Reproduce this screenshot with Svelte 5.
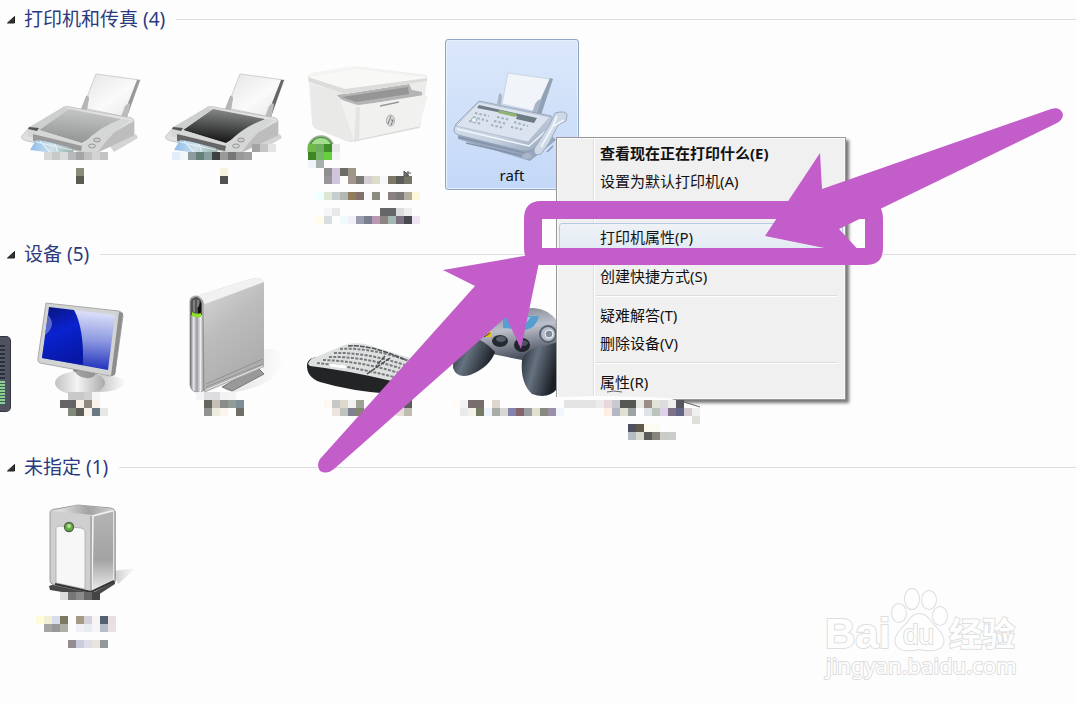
<script>
  const cellsOf = (rows) =>
    rows.flatMap(([x, y, colors]) =>
      colors
        .split(' ')
        .map((fill, i) => ({ x: x + i * 8, y, fill }))
        .filter((c) => c.fill !== '-')
    );

  const blocks = {
    printerA: [
      [44, 152, '#d8d8d8 #c8c9c9 #d9dadb #b8b9ba #a5a5a5 #c0c0c0 #d4d2d3 #c4c4c4'],
      [76, 168, '#8b8c7c'],
      [76, 176, '#5d5b54']
    ],
    printerB: [
      [252, 144, '#a4a4a4 #c5c5c5 #e4e4e4'],
      [172, 152, '#e2eefa #f0f8f8 #8f9c9f #66807a #86a09e #3c4042 #9a9a9a #777777 #999999 #a0a0a0'],
      [220, 168, '#f6f4df'],
      [220, 176, '#50534f']
    ],
    multi: [
      [308, 144, '#6fb94a #6fae5f #3f8f27 #e8e8e8'],
      [308, 152, '#3d8527 #76b668 #66cf3d #f4f4f4'],
      [308, 160, '#f0f3f8 #a7b0ae'],
      [324, 168, '#8f8f8f #d0c4dd #6e6c64 #9c9788'],
      [324, 176, '#97959b #cfc6de - #a0958f #7b7974 #d6ced5 #dcdccb #f6f7fb #7c7868 #5c5b58 #787669'],
      [316, 192, '#f0ffff #dde8d2 #c6cdd1 #b3b8b3 #907d5c #82706a #f9f9f9 #8c8b80 - #888081 #7c7a76 #b4ad9f #fdf7d8'],
      [324, 208, '#f6f6fa #e6e9ea - - - - - #646667 #646667 #dcdcde #ecefed'],
      [316, 216, '#fffceb #d8dde2 - #effafc #f2f0f7 #9c9caf #797f8f #b898b2 #8f8484 #a3b8b2 #7b6f80 #474850 #f0e5f5']
    ],
    monitor: [
      [68, 392, '#c9c9c9 #c9c9c9 #d0d0d0 #f5f5f5'],
      [60, 400, '#646467 #646467 #f8f2e6 #8f897d #faf2ea'],
      [68, 408, '#83897a #5e5e56 #faf3ea #6b7885 #e6e8e6']
    ],
    drive: [
      [196, 392, '#f4f4f6 #dedee2 #dddddf #f2f2f2 #f4f4f4'],
      [204, 400, '#666661 #c4c0b8 #8a8c8c #909c96 #7f8f97'],
      [204, 408, '#929292 #ededdf #fbf5ee - #6d6f68']
    ],
    keyboard: [
      [324, 400, '#fdf8f2 #c9c7c3 #dcd8cc #f1f2f2 #9ea297 - - - - #eeeeee #5f5d5c'],
      [332, 408, '#ede5dc #c0c4c1 #7f8090 #80866f #dddddd - - - #e8e0d8 #bfbcb2']
    ],
    gamepad: [
      [452, 400, '#fffcf5 #f3f3f5 #786e6e #786e6e - #ddd8ce'],
      [460, 408, '#e8ebee #f5f2ea #757c66 #edf3fb #a8ada8 #d8d8d4 #8284ab #85646b #9a9ea2 #e2e1d1 #888a7f #9b8ea8 #f0f4fb']
    ],
    behindMenu: [
      [564, 400, '#e4e4e4 #e4e4e4 #e4e4e4 #e4e4e4 #ececec #e8d8dd #c8cacf #565854 #565854 #e8e8e4 #9b8c88 #e2e4d8 #dddddd #eeeeee #56565c'],
      [604, 408, '#fdeee2 #b4b8c4 #e0e0d3 #9da5a3 - #dde3e6 #bac4bb #dcd2ea #80708a #626488 #d5ccd0 #f0f0f0'],
      [692, 416, '#dfdfdb'],
      [628, 424, '#4c5060 #60584b #fdfaf2 #fdfaf2'],
      [628, 432, '#b4bcc4 #d8d8cf #5c5b57 #88847a #cbcbc7 #cbcdca']
    ],
    tower: [
      [60, 592, '#dcdcdc #777777 #8a8a8a #666666 #444444'],
      [36, 616, '#fffdd8 #f3efd5 #d8deeb #7b7a60 - #a59b84 #d6d0da #f7f5f5 #536170 #e8dfdf'],
      [44, 624, '#a5a5a5 #989898 #aeaea6 - #f0f0f7 #e9ecef #f7f4fa #b5bdc8 #e8e0e2'],
      [68, 640, '#938d92 #c9ccda #e1dcea #e9e4e0 #92989a']
    ]
  };

  const menu = [
    { text: '查看现在正在打印什么(E)', bold: true },
    { text: '设置为默认打印机(A)' },
    { blank: true },
    { text: '打印机属性(P)', hot: true },
    { sep: true },
    { text: '创建快捷方式(S)' },
    { sep: true },
    { text: '疑难解答(T)' },
    { text: '删除设备(V)' },
    { sep: true },
    { text: '属性(R)' }
  ];
</script>

{#snippet mosaic(rows)}
  <g shape-rendering="crispEdges">
    {#each cellsOf(rows) as c}
      <rect x={c.x} y={c.y} width="8" height="8" fill={c.fill} />
    {/each}
  </g>
{/snippet}

{#snippet heading(title)}
  <h2>
    <svg class="arrow" viewBox="0 0 8 8" aria-hidden="true"><path d="M7.5 0.5V7H0.5Z" fill="#333" stroke="#222" /></svg>
    <span>{title}</span>
  </h2>
{/snippet}

{#snippet inkjet(dx, lid, edge)}
  <g transform="translate({dx} 0)">
    <path d="M110 146L136 134L138 138L114 152Z" fill="#d4d4d4" />
    <path d="M96 74L140 80L126 117L83 108Z" fill="url(#paper)" stroke="#c4c4c4" stroke-width=".8" />
    <path d="M137 80L140 80L127 117L123 116Z" fill={edge} />
    <path d="M86 96Q89 95 89 99L87 110L81 109Z" fill="#b5b5b5" />
    <path d="M125 106Q130 101 130 105L127 118L121 117Z" fill="#bcbcbc" />
    <path d="M64 107Q67 106 70 107L132 118Q134 119 134 122V135L98 152Q87 154 82 152L27 141Q20 139 22 136L29 128Z" fill="url(#shell)" stroke="#b5b5b5" stroke-width=".7" />
    <path d="M134 121V135L98 152L88 149Q95 143 134 121Z" fill="#bdbdbd" />
    <path d="M69 109L121 119L82 143L39 130Z" fill={lid} />
    <path d="M29 127L39 130L83 144Q100 126 122 119L131 120Q113 130 98 152L84 151L27 136Z" fill="#d5d6d6" />
    <path d="M39 130L69 109L64 108L29 127Z" fill="#cecfcf" />
    <path d="M29 127L39 128L37 131L28 129Z" fill="#555" />
    <path d="M33 134L82 146L81 151L33 141Z" fill={edge} />
    <path d="M36 140L44 141L72 148L74 153L54 153L30 150Z" fill="url(#photo)" />
    <path d="M36 142L72 150M40 141L50 152M55 144L58 153" stroke="#f6fbff" stroke-width="1.2" opacity=".7" />
    <ellipse cx="97" cy="140" rx="3.4" ry="2" fill="#ccc" stroke="#888" stroke-width=".8" />
    <ellipse cx="92" cy="146" rx="3.4" ry="2" fill="#d5d5cf" stroke="#888" stroke-width=".8" />
  </g>
{/snippet}

<main>
  <svg class="defs" aria-hidden="true">
    <defs>
      <linearGradient id="paper" x1="0" y1="0" x2="1" y2="1"><stop stop-color="#e4e4e4" /><stop offset=".55" stop-color="#fafafa" /><stop offset="1" stop-color="#e6e6e6" /></linearGradient>
      <linearGradient id="shell" x2="1" y2="1"><stop stop-color="#dcdcdc" /><stop offset=".6" stop-color="#e3e3e3" /><stop offset="1" stop-color="#c6c6c6" /></linearGradient>
      <linearGradient id="lidLight" x1=".6" y1="0" x2=".4" y2="1"><stop stop-color="#c6c7c7" /><stop offset="1" stop-color="#929393" /></linearGradient>
      <linearGradient id="lidDark" x1=".6" y1="0" x2=".4" y2="1"><stop stop-color="#8b8d8d" /><stop offset="1" stop-color="#111" /></linearGradient>
      <linearGradient id="photo" x2="1"><stop stop-color="#8dbbec" /><stop offset=".5" stop-color="#cfe2ea" /><stop offset="1" stop-color="#93aca6" /></linearGradient>
      <linearGradient id="blueL" x2=".3" y2="1"><stop stop-color="#0a1478" /><stop offset=".5" stop-color="#0a22d0" /><stop offset="1" stop-color="#0718a8" /></linearGradient>
      <linearGradient id="blueR" x1=".4" y1="0" x2=".3" y2="1"><stop stop-color="#e4e8fb" /><stop offset=".5" stop-color="#8b97e0" /><stop offset="1" stop-color="#1626b8" /></linearGradient>
      <linearGradient id="base" x2="1"><stop stop-color="#c2c2c2" /><stop offset=".45" stop-color="#f4f4f4" /><stop offset="1" stop-color="#a9a9a9" /></linearGradient>
      <linearGradient id="side" x2=".5" y2="1"><stop stop-color="#dedede" /><stop offset=".5" stop-color="#bdbdbd" /><stop offset="1" stop-color="#acacac" /></linearGradient>
      <linearGradient id="spine" x2="1"><stop stop-color="#666" /><stop offset=".25" stop-color="#e4e4ea" /><stop offset=".5" stop-color="#9a9aa2" /><stop offset=".75" stop-color="#eee" /><stop offset="1" stop-color="#888" /></linearGradient>
      <linearGradient id="towerSide" x2="0" y2="1"><stop stop-color="#b4b4b4" /><stop offset=".6" stop-color="#a3a3a3" /><stop offset="1" stop-color="#efefef" /></linearGradient>
      <linearGradient id="towerTop" x2="1"><stop stop-color="#eee" /><stop offset=".6" stop-color="#a2a2a2" /><stop offset="1" stop-color="#ccc" /></linearGradient>
      <linearGradient id="pad" x2=".3" y2="1"><stop stop-color="#6d7480" /><stop offset=".5" stop-color="#bcc0ca" /><stop offset="1" stop-color="#4c5160" /></linearGradient>
      <linearGradient id="grip" x2="1" y2=".4"><stop stop-color="#20262e" /><stop offset=".45" stop-color="#667280" /><stop offset="1" stop-color="#1b2026" /></linearGradient>
      <linearGradient id="fax" x2="1" y2="1"><stop stop-color="#dde7f3" /><stop offset=".6" stop-color="#c4d0df" /><stop offset="1" stop-color="#93a3b8" /></linearGradient>
      <linearGradient id="shade" x2="1"><stop stop-color="#aaa" /><stop offset="1" stop-color="#fdfdfd" /></linearGradient>
      <linearGradient id="white" x2=".3" y2="1"><stop stop-color="#f6f6f5" /><stop offset="1" stop-color="#e2e2e1" /></linearGradient>
    </defs>
  </svg>

  <section>
    {@render heading('打印机和传真 (4)')}
    <div class="row">
      <button class="tile" aria-label="1">
        <svg viewBox="13 39 134 196">{@render inkjet(0, 'url(#lidLight)', '#999')}{@render mosaic(blocks.printerA)}</svg>
      </button>
      <button class="tile" aria-label="2">
        <svg viewBox="157 39 134 196">{@render inkjet(144, 'url(#lidDark)', '#666')}{@render mosaic(blocks.printerB)}</svg>
      </button>
      <button class="tile" aria-label="3">
        <svg viewBox="301 39 134 196">
          <path d="M308 76Q309 73 315 72L355 66L427 75V80L420 128L352 142Q348 142 344 140L314 127Q312 126 312 122Z" fill="url(#white)" />
          <path d="M310 84L358 97L355 141Q348 142 344 140L316 129Q313 128 313 124Z" fill="#e9e9e8" />
          <path d="M337 95L409 84L412 90L422 92V97L358 105L342 100Z" fill="#b4b4b4" />
          <path d="M342 97L408 87L409 94L356 102Z" fill="#959595" />
          <path d="M340 99L356 106L424 95Q428 95 427 99L419 127L354 141Z" fill="#f1f1f0" />
          <path d="M356 107L360 107L359 140L354 141Z" fill="#e4e4e3" />
          <path d="M310 77L356 69L428 77L427 81L345 94L309 82Q307 78 310 77Z" fill="#f8f8f7" />
          <path d="M309 82L345 94L427 81V78L345 89L308 77Z" fill="#dcdcdb" />
          <path d="M380 106L399 102" stroke="#999" stroke-width="1.3" />
          <path d="M419 127L354 141" stroke="#d4d4d3" stroke-width=".8" fill="none" />
          <ellipse cx="390.5" cy="120.5" rx="4" ry="5.5" fill="#ddd" stroke="#aaa" /><path d="M391 116L388 124M391 120L393 120L391 125" stroke="#777" fill="none" />
          <circle cx="321" cy="149" r="13" fill="#3f9b30" stroke="#a8aaa8" stroke-width="1.5" />
          <path d="M311 146Q313 138 321 138Q329 138 331 146Z" fill="#a6dc90" />
          <rect x="300" y="160" width="40" height="8" fill="#fdfdfd" />
          {@render mosaic(blocks.multi)}
          <path d="M404 176V171L409 176ZM406 173H411M408 171V176" fill="#77756c" stroke="#555" />
        </svg>
      </button>
      <button class="tile selected">
        <svg viewBox="446 40 132 125" aria-hidden="true">
          <path d="M458 139L530 161L556 140L552 136L530 150L460 130Z" fill="#8a99b0" opacity=".8" />
          <path d="M508 73L550 79L538 112L502 104Z" fill="#f1f5fa" stroke="#c3cedd" stroke-width=".8" />
          <path d="M550 78L553 79L541 115L535 112Z" fill="#93a1b4" />
          <path d="M499 94Q501 92 502 96L501 105L497 104ZM535 104Q540 97 541 101L537 114L532 113Z" fill="#a7b5c8" />
          <path d="M479 101L551 116Q553 117 552 121L550 134L532 150Q527 152 522 151L458 135Q453 133 454 129L456 124Z" fill="url(#fax)" stroke="#8c9bb0" stroke-width=".8" />
          <path d="M479 102L550 117L528 142L456 126Z" fill="#dbe4ee" stroke="#a9b6c7" stroke-width=".7" />
          <path d="M457 129L529 146L549 128" stroke="#f2f6fb" stroke-width="1.5" fill="none" />
          <path d="M458 137L525 153M466 143L528 157" stroke="#8593a8" stroke-width="1.4" />
          <path d="M479 105L537 118L534 123L516 119L517 116L477 108Z" fill="#6c7b84" />
          <path d="M499 110L517 114L515 117L498 113Z" fill="#91b373" />
          <g stroke="#a3b0c0" stroke-width="2" stroke-dasharray="2.5 2">
            <path d="M475 113L489 116M473 117L488 121M469 121L482 124M497 117L510 120M494 121L507 124M491 125L504 128M514 122L528 126M511 127L524 130" />
          </g>
          <circle cx="474" cy="120" r="2.6" fill="#eef3f8" stroke="#a5b2c3" />
          <path d="M555 113Q566 110 567 115L566 121L558 125L549 143L541 154Q534 157 534 149L550 124Z" fill="#cdd9e7" stroke="#9dabc0" />
          <path d="M557 116L552 128L541 147M564 120L554 126" stroke="#eef3f9" stroke-width="2" fill="none" />
          <path d="M553 146L547 152" stroke="#8a9ab0" stroke-width="1.5" />
          <ellipse cx="527" cy="156" rx="5" ry="3" fill="#a9b7c8" />
        </svg>
        <span>raft</span>
      </button>
    </div>
  </section>

  <section>
    {@render heading('设备 (5)')}
    <div class="row">
      <button class="tile" aria-label="4">
        <svg viewBox="13 274 134 174">
          <path d="M98 375Q120 375 126 382Q120 392 98 392Z" fill="url(#shade)" opacity=".7" />
          <path d="M74 366L98 372L94 380L72 377Z" fill="#999" />
          <ellipse cx="80" cy="383" rx="25" ry="12" fill="url(#base)" />
          <path d="M72 367L96 373Q94 379 86 378Q76 377 72 367Z" fill="#777" opacity=".65" />
          <path d="M46 303L119 311Q123 312 123 316L115 373Q114 376 110 376L40 363Q37 362 38 358Z" fill="#d2d3d3" stroke="#999" stroke-width=".8" />
          <path d="M119 312L123 313L115 375L111 376Z" fill="#8d8d8d" />
          <path d="M49 307L115 315L108 370L42 358Z" fill="url(#blueR)" />
          <path d="M49 307L74 310Q84 328 83 365L42 358Z" fill="url(#blueL)" />
          <path d="M48 315Q52 319 52 325Q50 332 45 335Z" fill="#7c89d6" opacity=".7" />
          {@render mosaic(blocks.monitor)}
        </svg>
      </button>
      <button class="tile" aria-label="5">
        <svg viewBox="157 274 134 174">
          <path d="M262 350Q280 345 284 360Q278 385 235 392L225 390Z" fill="url(#shade)" opacity=".35" />
          <path d="M222 387L257 367L264 374L232 391Z" fill="#999" stroke="#777" />
          <path d="M193 297L250 279Q260 276 264 282V367L206 392Q203 393 203 388L202 302Z" fill="url(#side)" />
          <path d="M193 297L250 279Q260 276 264 282L205 304Q200 295 193 297Z" fill="#f1f1f1" />
          <path d="M206 384L263 359M206 387L263 364" stroke="#929292" /><path d="M206 390L263 366" stroke="#e8e8e8" />
          <path d="M190 302Q190 296 196 296Q203 297 203 304L204 390Q201 394 196 392Q191 391 190 385Z" fill="url(#spine)" stroke="#858585" stroke-width=".7" />
          <path d="M191 301Q192 297 196 297Q202 298 202 304V315H191Z" fill="#555" /><path d="M194 300V312M198 300V307" stroke="#aaa" /><path d="M198 308L201 301V314H198Z" fill="#111" />
          <path d="M192 312Q196 315 201 313V317Q196 318 192 316Z" fill="#8ede2a" />
          {@render mosaic(blocks.drive)}
        </svg>
      </button>
      <button class="tile" aria-label="6">
        <svg viewBox="301 274 134 174">
          <path d="M307 364Q309 357 318 357L400 370Q416 372 420 378Q410 394 391 394Q350 391 320 382Q306 377 307 364Z" fill="#222426" />
          <path d="M308 364Q310 358 316 357L342 346Q350 342 365 344L410 358L418 371Q410 384 392 381Q345 370 310 366Z" fill="#dedfdf" />
          <g fill="none" stroke="#777b7d" stroke-width="2" stroke-dasharray="3 1.4">
            <path d="M340 349Q370 347 409 361M334 353Q365 352 405 365M329 357Q360 356 400 368M323 360Q360 361 399 373M317 363Q350 366 394 377" />
          </g>
          <path d="M348 346Q370 344 406 360M390 358L367 374M385 356L376 366" stroke="#4d5153" stroke-width="1.5" fill="none" stroke-dasharray="5 1" />
          <path d="M330 365L346 367" stroke="#fff" stroke-width="3" />
          {@render mosaic(blocks.keyboard)}
        </svg>
      </button>
      <button class="tile" aria-label="7">
        <svg viewBox="445 274 134 174">
          <path d="M458 352Q462 326 485 318Q500 308 534 308Q549 309 558 322L562 350L540 362L522 360L492 354L470 360Z" fill="url(#pad)" />
          <path d="M461 336Q480 335 495 352Q490 367 470 375Q457 379 453 368Q452 350 461 336Z" fill="url(#grip)" />
          <path d="M522 360Q526 348 545 346L558 342V388Q548 400 532 394Q520 383 522 360Z" fill="url(#grip)" />
          <path d="M503 317L539 316Q536 328 526 330L503 328Z" fill="#559ed0" /><path d="M506 318L531 317L522 328Z" fill="#9ac9e8" />
          <path d="M484 332H491V337H480Z" fill="#e2c226" /><path d="M484 337L490 333" stroke="#333" />
          <ellipse cx="500" cy="341" rx="8" ry="6" fill="#252a30" /><ellipse cx="501" cy="339" rx="5" ry="3" fill="#555e69" />
          <ellipse cx="522" cy="345" rx="8" ry="7" fill="#20242a" /><ellipse cx="523" cy="343" rx="5" ry="3" fill="#4b545e" />
          <circle cx="548" cy="334" r="8" fill="#b6bdc8" stroke="#56606c" stroke-width="2" /><circle cx="549" cy="334" r="4" fill="#8290a1" stroke="#f6f7f9" />
          {@render mosaic(blocks.gamepad)}
        </svg>
      </button>
    </div>
  </section>

  <section>
    {@render heading('未指定 (1)')}
    <div class="row">
      <button class="tile" aria-label="8">
        <svg viewBox="13 487 134 174">
          <path d="M113 571L136 568L118 584Z" fill="url(#shade)" opacity=".6" />
          <path d="M49 586L60 582L115 580V584L98 595L92 597L50 590Z" fill="#484848" />
          <path d="M50 513Q50 509 56 509L78 505L111 508Q115 509 115 512V581L92 593L54 585Q50 584 50 580Z" fill="#cfcfcf" stroke="#8c8c8c" stroke-width=".8" />
          <path d="M53 511L78 505L112 509L93 515Z" fill="url(#towerTop)" />
          <path d="M93 516L112 511Q114 510 114 513V580L92 592Z" fill="url(#towerSide)" stroke="#f1f1f1" stroke-width="1.5" />
          <path d="M91 516V593M115 511V582" stroke="#888" />
          <path d="M56 528Q56 526 60 526L81 528Q85 529 85 531V589L56 583Z" fill="#f7f7f7" stroke="#aaa" stroke-width=".8" />
          <path d="M55 584L91 592L114 581" stroke="#333" stroke-width="2" fill="none" />
          <circle cx="69" cy="527" r="4.5" fill="#65ae45" stroke="#4e6149" stroke-width="1.3" /><circle cx="69" cy="526" r="2" fill="#b4df8e" />
          {@render mosaic(blocks.tower)}
        </svg>
      </button>
    </div>
  </section>

  <div class="meter"></div>

  <ul class="menu">
    {#each menu as m}
      {#if m.sep}
        <li class="sep"></li>
      {:else if m.blank}
        <li class="blank"></li>
      {:else}
        <li><button class:bold={m.bold} class:hot={m.hot}>{m.text}</button></li>
      {/if}
    {/each}
  </ul>

  <svg class="overlay" viewBox="0 0 1076 704" aria-hidden="true">
    <path d="M554 397L600 396L640 397L668 398L701 408L694 415L556 408Z" fill="#fdfdfd" />
    <path d="M607 392Q613 390 622 392M684 402L700 407" stroke="#666" fill="none" />
    {@render mosaic(blocks.behindMenu)}
    <g fill="#c35dca">
      <path fill-rule="evenodd" d="M541 201H866Q883 201 883 219V248Q883 265 866 265H541Q524 265 524 248V219Q524 201 541 201ZM542 219V248H865V219Z" />
      <path d="M765 236L820 153L822 189L1051 109Q1060 106 1063 114Q1063 120 1057 123L839 229L864 256Z" />
      <path d="M541 253L443 270L475 286L320 459Q316 465 320 471Q327 475 334 469L506 317L521 349Z" />
    </g>
  </svg>

  <svg class="mark" viewBox="820 580 204 104">
    <g fill="#fefefe" stroke="#dedede" stroke-width="2" paint-order="stroke">
      <text x="825" y="648" class="logo">Bai</text>
      <ellipse cx="899" cy="613" rx="7" ry="9" /><ellipse cx="912" cy="599" rx="7" ry="10" />
      <ellipse cx="929" cy="600" rx="7" ry="9" /><ellipse cx="940" cy="616" rx="7" ry="9" />
      <path d="M919 614Q926 614 931 622L940 632Q947 642 940 648Q933 652 919 649Q905 652 899 648Q892 642 899 632L908 622Q913 614 919 614Z" />
      <text x="903" y="644" class="du">du</text>
      <text x="949" y="646" class="cn">经验</text>
      <text x="826" y="674" class="url">jingyan.baidu.com</text>
    </g>
  </svg>
</main>

<style>
  :global(body) {
    margin: 0;
    background: #fdfdfd;
  }
  main {
    position: relative;
    min-height: 704px;
    overflow: hidden;
    font-family: 'Noto Sans', 'Noto Sans CJK SC', sans-serif;
    color: #111;
  }
  .defs {
    position: absolute;
    width: 0;
    height: 0;
  }
  h2 {
    display: flex;
    align-items: center;
    gap: 9px;
    height: 39px;
    margin: 0;
    padding-left: 7px;
    font-size: 19px;
    line-height: 24px;
    font-weight: 400;
    color: #2b3a80;
  }
  h2 span {
    padding-bottom: 2px;
    padding-right: 2px;
  }
  h2::after {
    content: '';
    flex: 1;
    height: 1px;
    background: #dedede;
  }
  .arrow {
    width: 8px;
    height: 8px;
  }
  .row {
    display: flex;
    flex-wrap: wrap;
    align-items: flex-start;
    gap: 10px;
    padding-left: 13px;
  }
  button {
    font: inherit;
    color: inherit;
    border: 0;
    background: none;
    padding: 0;
  }
  .tile {
    width: 134px;
  }
  .tile svg {
    display: block;
    width: 100%;
    overflow: visible;
  }
  .selected {
    box-sizing: border-box;
    border: 1px solid #8ea5c6;
    border-radius: 3px;
    background: linear-gradient(#dce8fa, #c3d8f8);
    box-shadow: inset 0 0 0 1px #e6effc;
    font-size: 15px;
    line-height: 20px;
    padding-bottom: 4px;
  }
  .selected span {
    display: block;
  }
  .meter {
    position: absolute;
    left: 0;
    top: 336px;
    width: 10px;
    height: 74px;
    border: 1px solid #33363f;
    border-left: 0;
    border-radius: 0 5px 5px 0;
    background:
      repeating-linear-gradient(#2c2f38 0 2px, #555a68 2px 4px) 0 8px / 5px 36px no-repeat,
      repeating-linear-gradient(#8fce91 0 2px, #3e5e5e 2px 3px) 0 44px / 5px 24px no-repeat,
      #50535f;
  }
  .menu {
    position: absolute;
    left: 556px;
    top: 137px;
    box-sizing: border-box;
    width: 290px;
    margin: 0;
    padding: 1px 2px 3px;
    list-style: none;
    border: 1px solid #989898;
    background: linear-gradient(90deg, #f0f0f0 36px, #dfdfdf 36px 37px, #fff 37px 38px, #f0f0f0 38px);
    box-shadow: inset 0 0 0 1px #f8f8f8, 3px 3px 3px #777;
    font-size: 15px;
    line-height: 20px;
  }
  .menu button {
    display: block;
    box-sizing: border-box;
    width: 100%;
    height: 28px;
    padding: 0 0 0 40px;
    border: 1px solid transparent;
    border-radius: 3px;
    text-align: left;
  }
  .menu .bold {
    font-weight: 700;
  }
  .menu .hot {
    border-color: #b4cbe2;
    background: linear-gradient(#eff2f6, #e2eaf3);
  }
  .blank {
    height: 28px;
  }
  .sep {
    height: 11px;
    margin: 0 6px 0 37px;
    background: linear-gradient(transparent 5px, #dcdcdc 5px 6px, #fff 6px 7px, transparent 7px);
  }
  .overlay {
    position: absolute;
    left: 0;
    top: 0;
    width: 1076px;
    height: 704px;
    pointer-events: none;
  }
  .mark {
    position: absolute;
    left: 820px;
    top: 580px;
    width: 204px;
    height: 104px;
  }
  .logo {
    font: 700 42px 'Liberation Sans', sans-serif;
  }
  .du {
    font: 400 28px 'Liberation Sans', sans-serif;
  }
  .cn {
    font: 700 33px 'Noto Sans CJK SC', sans-serif;
  }
  .url {
    font: 400 22px 'Noto Sans', sans-serif;
  }
</style>
